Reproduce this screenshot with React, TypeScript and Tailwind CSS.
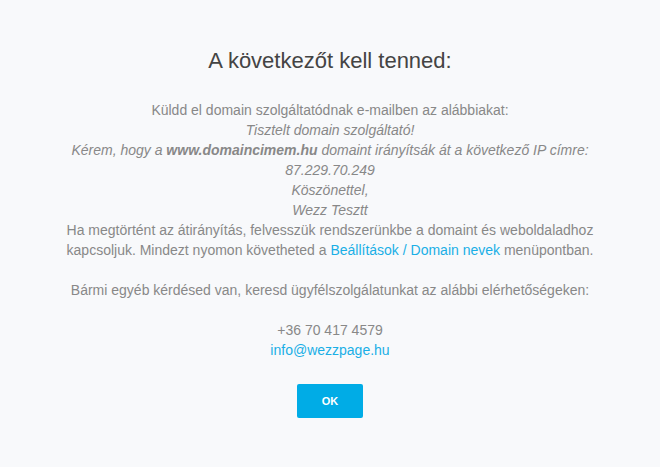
export default function App() {
  return (
    <div
      className="min-h-[467px] w-full bg-[#f8f9fb] flex flex-col items-center"
      style={{ fontFamily: '"Liberation Sans", Arial, sans-serif' }}
    >
      <h1 className="mt-[46px] text-[22px] leading-[30px] text-[#444444] font-normal">
        A következőt kell tenned:
      </h1>
      <div className="mt-[24px] w-[540px] text-center text-[14px] leading-[20px] text-[#888888]">
        <p>Küldd el domain szolgáltatódnak e-mailben az alábbiakat:</p>
        <p className="italic">Tisztelt domain szolgáltató!</p>
        <p className="italic">
          Kérem, hogy a <b className="font-bold">www.domaincimem.hu</b> domaint irányítsák át a következő IP címre:
        </p>
        <p className="italic">87.229.70.249</p>
        <p className="italic">Köszönettel,</p>
        <p className="italic">Wezz Tesztt</p>
        <p>
          Ha megtörtént az átirányítás, felvesszük rendszerünkbe a domaint és weboldaladhoz kapcsoljuk. Mindezt nyomon követheted a{" "}
          <a className="text-[#1aafe6]">Beállítások / Domain nevek</a> menüpontban.
        </p>
        <p className="mt-[20px]">Bármi egyéb kérdésed van, keresd ügyfélszolgálatunkat az alábbi elérhetőségeken:</p>
        <p className="mt-[20px]">+36 70 417 4579</p>
        <p>
          <a className="text-[#1aafe6]">info@wezzpage.hu</a>
        </p>
      </div>
      <button className="mt-[24px] w-[66px] h-[34px] rounded-[2px] bg-[#00ace6] text-white text-[11px] font-bold">
        OK
      </button>
    </div>
  );
}
